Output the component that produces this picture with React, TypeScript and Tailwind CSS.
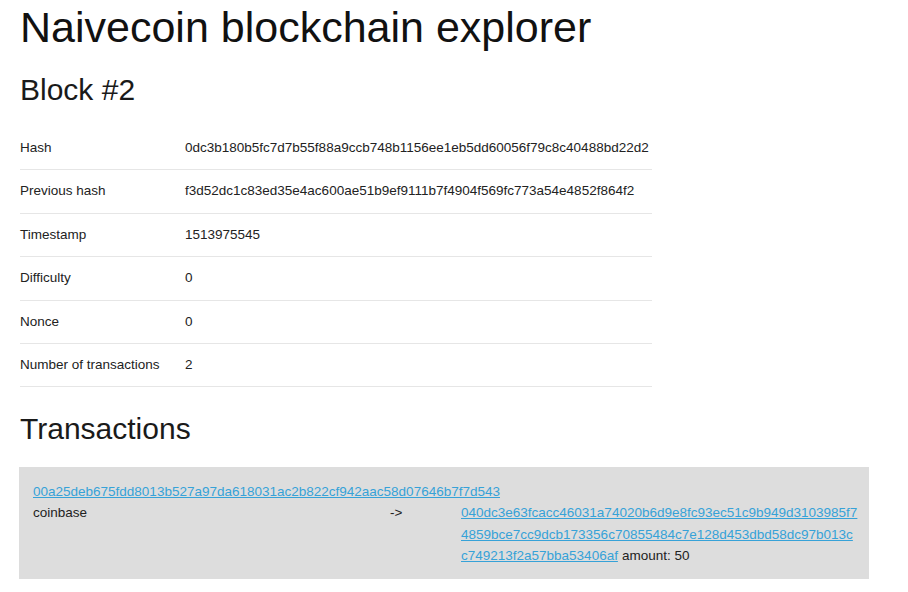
export default function App() {
  const rows = [
    { label: "Hash", value: "0dc3b180b5fc7d7b55f88a9ccb748b1156ee1eb5dd60056f79c8c40488bd22d2" },
    { label: "Previous hash", value: "f3d52dc1c83ed35e4ac600ae51b9ef9111b7f4904f569fc773a54e4852f864f2" },
    { label: "Timestamp", value: "1513975545" },
    { label: "Difficulty", value: "0" },
    { label: "Nonce", value: "0" },
    { label: "Number of transactions", value: "2" },
  ];

  return (
    <div className="min-h-[592px] bg-white pl-5 text-[#222] font-['Liberation_Sans',Arial,sans-serif]">
      <h1 className="pt-[3px] text-[43px] leading-[48px] text-[#111]">Naivecoin blockchain explorer</h1>
      <h2 className="mt-[21px] text-[30px] leading-[36px] text-[#1a1a1a]">Block #2</h2>

      <div className="mt-[19px] w-[632px] text-[13.5px]">
        {rows.map((r) => (
          <div key={r.label} className="flex h-[43.4px] items-center border-b border-[#e6e6e6]">
            <div className="w-[165px]">{r.label}</div>
            <div>{r.value}</div>
          </div>
        ))}
      </div>

      <h2 className="mt-[24px] text-[30px] leading-[36px] text-[#1a1a1a]">Transactions</h2>

      <div className="mt-[20px] ml-[-1px] w-[850px] bg-[#dddddd] pl-[14px] pt-[13.5px] pb-[12.5px] text-[13.5px] leading-[21.33px]">
        <div>
          <a href="#" className="text-[#36a2d8] underline">
            00a25deb675fdd8013b527a97da618031ac2b822cf942aac58d07646b7f7d543
          </a>
        </div>
        <div className="flex">
          <div className="w-[357px]">coinbase</div>
          <div className="w-[71px]">-&gt;</div>
          <div className="w-[397px] break-all">
            <a href="#" className="text-[#36a2d8] underline">
              040dc3e63fcacc46031a74020b6d9e8fc93ec51c9b949d3103985f74859bce7cc9dcb173356c70855484c7e128d453dbd58dc97b013cc749213f2a57bba53406af
            </a>
            <span className="ml-1">amount: 50</span>
          </div>
        </div>
      </div>
    </div>
  );
}
